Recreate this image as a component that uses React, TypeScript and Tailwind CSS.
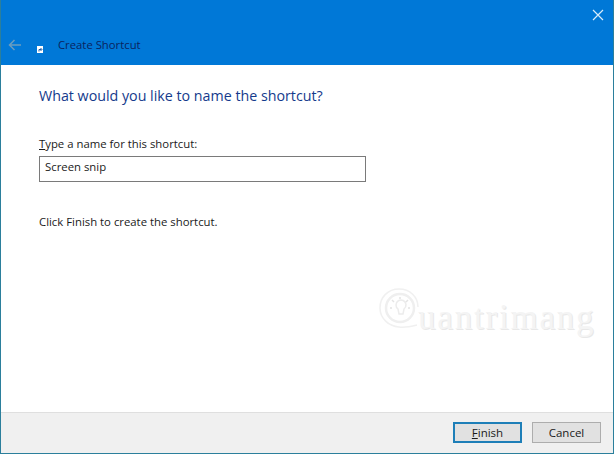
import { Fragment } from 'react'

const font = { fontFamily: '"Open Sans", "Noto Sans", sans-serif' }

function Watermark() {
  return (
    <div className="absolute left-[378px] top-[288px] flex items-start text-[#f4f4f4]">
      <svg width="42" height="40" viewBox="0 0 42 40" fill="none" stroke="currentColor" className="shrink-0">
        <path d="M38 37 C30 39 24 39.500 20 39 C9 38 1 30 1 20 C1 9 9 1 20 1 C31 1 39 9 39 19" strokeWidth="1.500" stroke="#f0f0f0" />
        <circle cx="21" cy="20" r="14" strokeWidth="2.500" stroke="#efefef" />
        <path d="M17 17 a5 5 0 1 1 8 4 l-1 5 h-4 l-1 -5 a5 5 0 0 1 -2 -4" strokeWidth="1.500" stroke="#ececec" />
        <path d="M21 9 v2 M13 12 l2 2 M29 12 l-2 2 M11 20 h2 M29 20 h2" strokeWidth="1.500" stroke="#e4e4e4" />
      </svg>
      <span
        className="ml-[-3px] mt-[12px] text-[35px] leading-none tracking-[1.800px] [text-shadow:1px_1px_0_#e8e8e8]"
        style={{ fontFamily: '"Liberation Serif", serif' }}
      >
        uantrimang
      </span>
    </div>
  )
}

export default function App() {
  return (
    <div className="relative flex h-[454px] w-[614px] flex-col overflow-hidden border-x border-b border-[#2b7f9c] bg-white text-[11.350px] text-[#1a1a1a]" style={font}>
      <header className="relative flex h-[65px] shrink-0 items-end bg-[#0078d7] pb-[12px] pl-[7px]">
        <svg width="14" height="12" viewBox="0 0 14 12" fill="none" stroke="#6c9dbf" strokeWidth="1.500" className="mb-[2px]">
          <path d="M13 6H1.500M6.500 1 1.500 6l5 5" />
        </svg>
        <span className="mb-[0px] ml-[15px] flex h-[7px] w-[6px] items-center justify-center bg-white">
          <svg width="5" height="5" viewBox="0 0 5 5" fill="none" stroke="#1e5fa8" strokeWidth="1">
            <path d="M1 4.500V2.500h2.500M2.500 1 4 2.500 2.500 4" />
          </svg>
        </span>
        <span className="ml-[15px] text-[11.300px] leading-[16px] text-[#0a2460]">Create Shortcut</span>
        <svg width="12" height="12" viewBox="0 0 12 12" stroke="#d8ecfa" strokeWidth="1.200" className="absolute right-[9px] top-[9px]">
          <path d="M1 1l10 10M11 1 1 11" />
        </svg>
      </header>

      <main className="flex flex-1 flex-col pl-[38px] pr-[248px] pt-[21px]">
        <h1 className="whitespace-nowrap text-[14.250px] leading-[20px] text-[#143a8c]">What would you like to name the shortcut?</h1>
        <label className="mt-[30px] leading-[16px]"><u>T</u>ype a name for this shortcut:</label>
        <div className="mt-[4px] flex h-[26px] w-[327px] shrink-0 items-center border border-[#7a7a7a] pb-[4px] pl-[5px]">Screen snip</div>
        <p className="mt-[32px] whitespace-nowrap leading-[16px]">Click Finish to create the shortcut.</p>
      </main>

      <Watermark />

      <footer className="flex h-[41px] shrink-0 items-start justify-end gap-[10px] border-t border-[#dfdfdf] bg-[#f0f0f0] pr-[12px] pt-[9px]">
        <button className="h-[21px] w-[69px] border-2 border-[#1e7fb8] bg-[#e1e1e1] text-[11.500px] leading-none"><u>F</u>inish</button>
        <button className="h-[21px] w-[69px] border border-[#adadad] bg-[#e1e1e1] text-[11.500px] leading-none">Cancel</button>
      </footer>
    </div>
  )
}
